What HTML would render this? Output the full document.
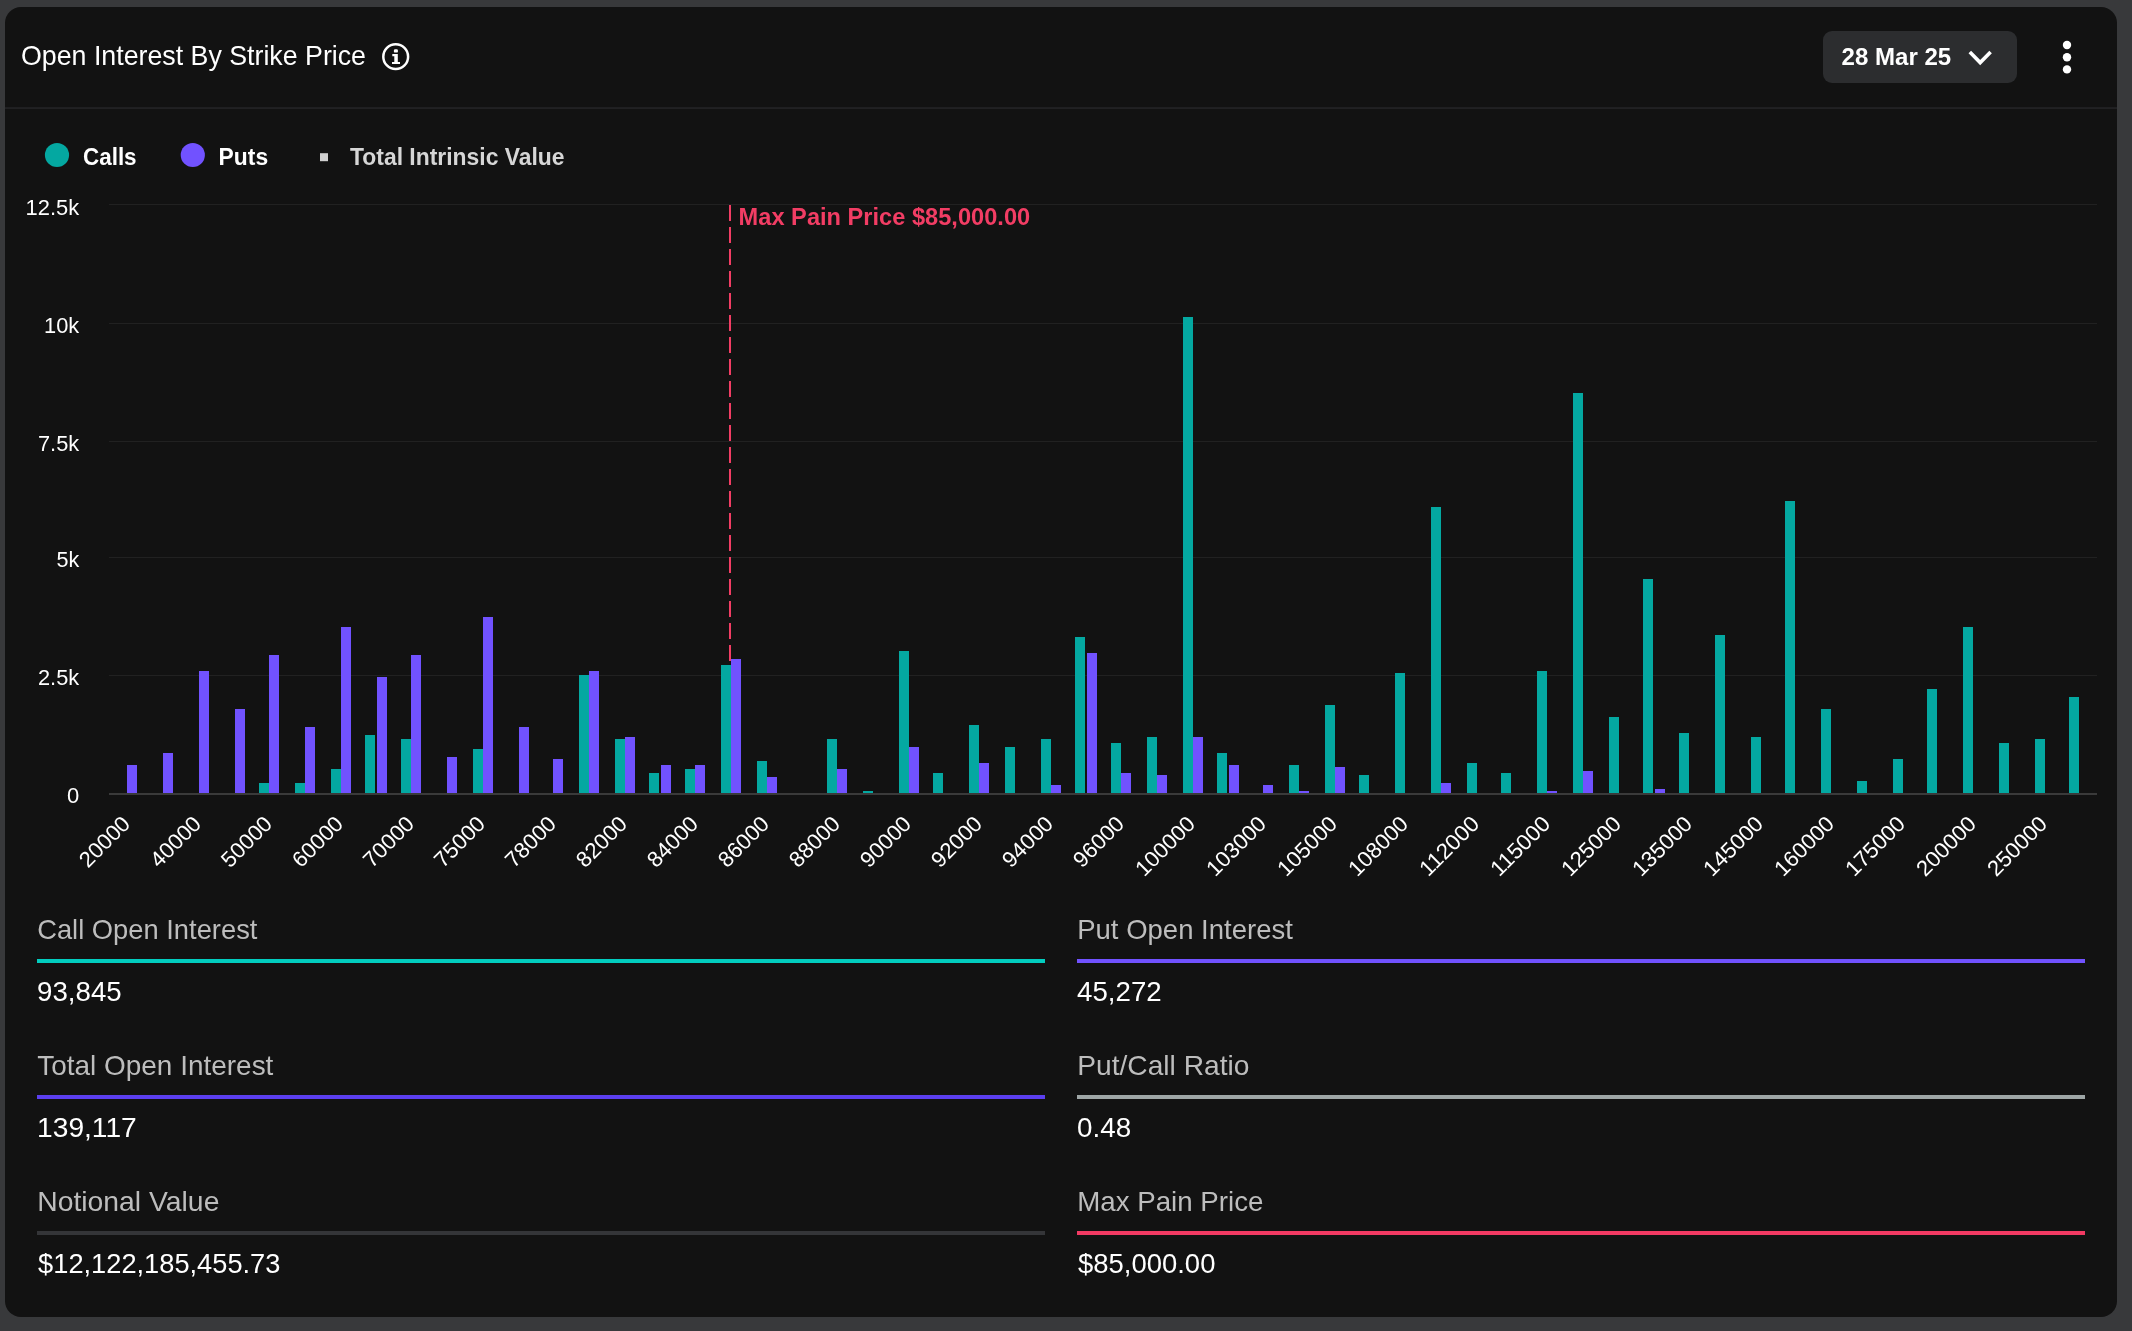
<!DOCTYPE html>
<html><head><meta charset="utf-8"><title>Open Interest By Strike Price</title>
<style>html,body{margin:0;padding:0;background:#38393b;}body{width:2132px;height:1331px;overflow:hidden;}svg{display:block;will-change:transform;}text{font-family:"Liberation Sans", sans-serif;}</style>
</head><body>
<svg width="2132" height="1331" viewBox="0 0 2132 1331">
<rect x="0" y="0" width="2132" height="1331" fill="#38393b"/>
<rect x="5" y="7" width="2112" height="1310" rx="16" ry="16" fill="#121212"/>
<text x="21" y="64.6" font-size="27.8" fill="#ffffff" font-weight="normal" text-anchor="start" textLength="345" lengthAdjust="spacingAndGlyphs">Open Interest By Strike Price</text>
<circle cx="395.7" cy="56.7" r="12.4" fill="none" stroke="#fff" stroke-width="2.5"/>
<rect x="393.9" y="49.2" width="4" height="3.4" rx="1.2" fill="#fff"/>
<path d="M392.3 54.1H397.8V62.1H400V64H392V62.1H394.3V56.2H392.3Z" fill="#fff"/>
<rect x="1823" y="31" width="194" height="52" rx="9" fill="#2c2d2f"/>
<text x="1841.6" y="65.2" font-size="24.8" fill="#fff" font-weight="bold" text-anchor="start" textLength="109.6" lengthAdjust="spacingAndGlyphs">28 Mar 25</text>
<path d="M1969.8 52.1L1980.2 62.6L1990.6 52.1" fill="none" stroke="#fff" stroke-width="3.6" stroke-linejoin="miter"/>
<circle cx="2067" cy="45" r="4.2" fill="#fff"/>
<circle cx="2067" cy="57.2" r="4.2" fill="#fff"/>
<circle cx="2067" cy="69.4" r="4.2" fill="#fff"/>
<rect x="5" y="107.4" width="2112" height="1.3" fill="#28292b"/>
<circle cx="57" cy="155" r="12.1" fill="#04a8a1"/>
<text x="83" y="164.8" font-size="24.3" fill="#fff" font-weight="bold" text-anchor="start" textLength="53.6" lengthAdjust="spacingAndGlyphs">Calls</text>
<circle cx="192.8" cy="155" r="12.1" fill="#7152ff"/>
<text x="218.6" y="164.8" font-size="24.3" fill="#fff" font-weight="bold" text-anchor="start" textLength="49.5" lengthAdjust="spacingAndGlyphs">Puts</text>
<rect x="320" y="153.2" width="8" height="8" fill="#d0d0d0"/>
<text x="350" y="164.8" font-size="24.3" fill="#d6d6d6" font-weight="bold" text-anchor="start" textLength="214.6" lengthAdjust="spacingAndGlyphs">Total Intrinsic Value</text>
<rect x="109" y="204" width="1988" height="1" fill="#212121"/>
<text x="79.2" y="214.8" font-size="22" fill="#fff" font-weight="normal" text-anchor="end" textLength="53.6" lengthAdjust="spacingAndGlyphs">12.5k</text>
<rect x="109" y="323" width="1988" height="1" fill="#212121"/>
<text x="79.2" y="333.3" font-size="22" fill="#fff" font-weight="normal" text-anchor="end" textLength="35.2" lengthAdjust="spacingAndGlyphs">10k</text>
<rect x="109" y="441" width="1988" height="1" fill="#212121"/>
<text x="79.2" y="451.3" font-size="22" fill="#fff" font-weight="normal" text-anchor="end" textLength="41.2" lengthAdjust="spacingAndGlyphs">7.5k</text>
<rect x="109" y="557" width="1988" height="1" fill="#212121"/>
<text x="79.2" y="567.3" font-size="22" fill="#fff" font-weight="normal" text-anchor="end" textLength="22.8" lengthAdjust="spacingAndGlyphs">5k</text>
<rect x="109" y="675" width="1988" height="1" fill="#212121"/>
<text x="79.2" y="685.3" font-size="22" fill="#fff" font-weight="normal" text-anchor="end" textLength="41.2" lengthAdjust="spacingAndGlyphs">2.5k</text>
<text x="79.2" y="803.3" font-size="22" fill="#fff" font-weight="normal" text-anchor="end">0</text>
<line x1="730" y1="205" x2="730" y2="793" stroke="#f23d64" stroke-width="2" stroke-dasharray="16 6"/>
<text x="738.6" y="225" font-size="23.7" fill="#f23d64" font-weight="bold" text-anchor="start" textLength="291.6" lengthAdjust="spacingAndGlyphs">Max Pain Price $85,000.00</text>
<g fill="#04a8a1">
<rect x="259" y="783" width="10" height="10"/>
<rect x="295" y="783" width="10" height="10"/>
<rect x="331" y="769" width="10" height="24"/>
<rect x="365" y="735" width="10" height="58"/>
<rect x="401" y="739" width="10" height="54"/>
<rect x="473" y="749" width="10" height="44"/>
<rect x="579" y="675" width="10" height="118"/>
<rect x="615" y="739" width="10" height="54"/>
<rect x="649" y="773" width="10" height="20"/>
<rect x="685" y="769" width="10" height="24"/>
<rect x="721" y="665" width="10" height="128"/>
<rect x="757" y="761" width="10" height="32"/>
<rect x="827" y="739" width="10" height="54"/>
<rect x="863" y="791" width="10" height="2"/>
<rect x="899" y="651" width="10" height="142"/>
<rect x="933" y="773" width="10" height="20"/>
<rect x="969" y="725" width="10" height="68"/>
<rect x="1005" y="747" width="10" height="46"/>
<rect x="1041" y="739" width="10" height="54"/>
<rect x="1075" y="637" width="10" height="156"/>
<rect x="1111" y="743" width="10" height="50"/>
<rect x="1147" y="737" width="10" height="56"/>
<rect x="1183" y="317" width="10" height="476"/>
<rect x="1217" y="753" width="10" height="40"/>
<rect x="1289" y="765" width="10" height="28"/>
<rect x="1325" y="705" width="10" height="88"/>
<rect x="1359" y="775" width="10" height="18"/>
<rect x="1395" y="673" width="10" height="120"/>
<rect x="1431" y="507" width="10" height="286"/>
<rect x="1467" y="763" width="10" height="30"/>
<rect x="1501" y="773" width="10" height="20"/>
<rect x="1537" y="671" width="10" height="122"/>
<rect x="1573" y="393" width="10" height="400"/>
<rect x="1609" y="717" width="10" height="76"/>
<rect x="1643" y="579" width="10" height="214"/>
<rect x="1679" y="733" width="10" height="60"/>
<rect x="1715" y="635" width="10" height="158"/>
<rect x="1751" y="737" width="10" height="56"/>
<rect x="1785" y="501" width="10" height="292"/>
<rect x="1821" y="709" width="10" height="84"/>
<rect x="1857" y="781" width="10" height="12"/>
<rect x="1893" y="759" width="10" height="34"/>
<rect x="1927" y="689" width="10" height="104"/>
<rect x="1963" y="627" width="10" height="166"/>
<rect x="1999" y="743" width="10" height="50"/>
<rect x="2035" y="739" width="10" height="54"/>
<rect x="2069" y="697" width="10" height="96"/>
</g><g fill="#7152ff">
<rect x="127" y="765" width="10" height="28"/>
<rect x="163" y="753" width="10" height="40"/>
<rect x="199" y="671" width="10" height="122"/>
<rect x="235" y="709" width="10" height="84"/>
<rect x="269" y="655" width="10" height="138"/>
<rect x="305" y="727" width="10" height="66"/>
<rect x="341" y="627" width="10" height="166"/>
<rect x="377" y="677" width="10" height="116"/>
<rect x="411" y="655" width="10" height="138"/>
<rect x="447" y="757" width="10" height="36"/>
<rect x="483" y="617" width="10" height="176"/>
<rect x="519" y="727" width="10" height="66"/>
<rect x="553" y="759" width="10" height="34"/>
<rect x="589" y="671" width="10" height="122"/>
<rect x="625" y="737" width="10" height="56"/>
<rect x="661" y="765" width="10" height="28"/>
<rect x="695" y="765" width="10" height="28"/>
<rect x="731" y="659" width="10" height="134"/>
<rect x="767" y="777" width="10" height="16"/>
<rect x="837" y="769" width="10" height="24"/>
<rect x="909" y="747" width="10" height="46"/>
<rect x="979" y="763" width="10" height="30"/>
<rect x="1051" y="785" width="10" height="8"/>
<rect x="1087" y="653" width="10" height="140"/>
<rect x="1121" y="773" width="10" height="20"/>
<rect x="1157" y="775" width="10" height="18"/>
<rect x="1193" y="737" width="10" height="56"/>
<rect x="1229" y="765" width="10" height="28"/>
<rect x="1263" y="785" width="10" height="8"/>
<rect x="1299" y="791" width="10" height="2"/>
<rect x="1335" y="767" width="10" height="26"/>
<rect x="1441" y="783" width="10" height="10"/>
<rect x="1547" y="791" width="10" height="2"/>
<rect x="1583" y="771" width="10" height="22"/>
<rect x="1655" y="789" width="10" height="4"/>
</g>
<rect x="109" y="793" width="1988" height="2" fill="#3a3a3a"/>
<text x="131.6" y="825.2" font-size="22" fill="#fff" text-anchor="end" textLength="61.6" lengthAdjust="spacingAndGlyphs" transform="rotate(-45 131.6 825.2)">20000</text>
<text x="202.6" y="825.2" font-size="22" fill="#fff" text-anchor="end" textLength="61.6" lengthAdjust="spacingAndGlyphs" transform="rotate(-45 202.6 825.2)">40000</text>
<text x="273.6" y="825.2" font-size="22" fill="#fff" text-anchor="end" textLength="61.6" lengthAdjust="spacingAndGlyphs" transform="rotate(-45 273.6 825.2)">50000</text>
<text x="344.6" y="825.2" font-size="22" fill="#fff" text-anchor="end" textLength="61.6" lengthAdjust="spacingAndGlyphs" transform="rotate(-45 344.6 825.2)">60000</text>
<text x="415.6" y="825.2" font-size="22" fill="#fff" text-anchor="end" textLength="61.6" lengthAdjust="spacingAndGlyphs" transform="rotate(-45 415.6 825.2)">70000</text>
<text x="486.6" y="825.2" font-size="22" fill="#fff" text-anchor="end" textLength="61.6" lengthAdjust="spacingAndGlyphs" transform="rotate(-45 486.6 825.2)">75000</text>
<text x="557.6" y="825.2" font-size="22" fill="#fff" text-anchor="end" textLength="61.6" lengthAdjust="spacingAndGlyphs" transform="rotate(-45 557.6 825.2)">78000</text>
<text x="628.6" y="825.2" font-size="22" fill="#fff" text-anchor="end" textLength="61.6" lengthAdjust="spacingAndGlyphs" transform="rotate(-45 628.6 825.2)">82000</text>
<text x="699.6" y="825.2" font-size="22" fill="#fff" text-anchor="end" textLength="61.6" lengthAdjust="spacingAndGlyphs" transform="rotate(-45 699.6 825.2)">84000</text>
<text x="770.6" y="825.2" font-size="22" fill="#fff" text-anchor="end" textLength="61.6" lengthAdjust="spacingAndGlyphs" transform="rotate(-45 770.6 825.2)">86000</text>
<text x="841.6" y="825.2" font-size="22" fill="#fff" text-anchor="end" textLength="61.6" lengthAdjust="spacingAndGlyphs" transform="rotate(-45 841.6 825.2)">88000</text>
<text x="912.6" y="825.2" font-size="22" fill="#fff" text-anchor="end" textLength="61.6" lengthAdjust="spacingAndGlyphs" transform="rotate(-45 912.6 825.2)">90000</text>
<text x="983.6" y="825.2" font-size="22" fill="#fff" text-anchor="end" textLength="61.6" lengthAdjust="spacingAndGlyphs" transform="rotate(-45 983.6 825.2)">92000</text>
<text x="1054.6" y="825.2" font-size="22" fill="#fff" text-anchor="end" textLength="61.6" lengthAdjust="spacingAndGlyphs" transform="rotate(-45 1054.6 825.2)">94000</text>
<text x="1125.6" y="825.2" font-size="22" fill="#fff" text-anchor="end" textLength="61.6" lengthAdjust="spacingAndGlyphs" transform="rotate(-45 1125.6 825.2)">96000</text>
<text x="1196.6" y="825.2" font-size="22" fill="#fff" text-anchor="end" textLength="74.0" lengthAdjust="spacingAndGlyphs" transform="rotate(-45 1196.6 825.2)">100000</text>
<text x="1267.6" y="825.2" font-size="22" fill="#fff" text-anchor="end" textLength="74.0" lengthAdjust="spacingAndGlyphs" transform="rotate(-45 1267.6 825.2)">103000</text>
<text x="1338.6" y="825.2" font-size="22" fill="#fff" text-anchor="end" textLength="74.0" lengthAdjust="spacingAndGlyphs" transform="rotate(-45 1338.6 825.2)">105000</text>
<text x="1409.6" y="825.2" font-size="22" fill="#fff" text-anchor="end" textLength="74.0" lengthAdjust="spacingAndGlyphs" transform="rotate(-45 1409.6 825.2)">108000</text>
<text x="1480.6" y="825.2" font-size="22" fill="#fff" text-anchor="end" textLength="74.0" lengthAdjust="spacingAndGlyphs" transform="rotate(-45 1480.6 825.2)">112000</text>
<text x="1551.6" y="825.2" font-size="22" fill="#fff" text-anchor="end" textLength="74.0" lengthAdjust="spacingAndGlyphs" transform="rotate(-45 1551.6 825.2)">115000</text>
<text x="1622.6" y="825.2" font-size="22" fill="#fff" text-anchor="end" textLength="74.0" lengthAdjust="spacingAndGlyphs" transform="rotate(-45 1622.6 825.2)">125000</text>
<text x="1693.6" y="825.2" font-size="22" fill="#fff" text-anchor="end" textLength="74.0" lengthAdjust="spacingAndGlyphs" transform="rotate(-45 1693.6 825.2)">135000</text>
<text x="1764.6" y="825.2" font-size="22" fill="#fff" text-anchor="end" textLength="74.0" lengthAdjust="spacingAndGlyphs" transform="rotate(-45 1764.6 825.2)">145000</text>
<text x="1835.6" y="825.2" font-size="22" fill="#fff" text-anchor="end" textLength="74.0" lengthAdjust="spacingAndGlyphs" transform="rotate(-45 1835.6 825.2)">160000</text>
<text x="1906.6" y="825.2" font-size="22" fill="#fff" text-anchor="end" textLength="74.0" lengthAdjust="spacingAndGlyphs" transform="rotate(-45 1906.6 825.2)">175000</text>
<text x="1977.6" y="825.2" font-size="22" fill="#fff" text-anchor="end" textLength="74.0" lengthAdjust="spacingAndGlyphs" transform="rotate(-45 1977.6 825.2)">200000</text>
<text x="2048.6" y="825.2" font-size="22" fill="#fff" text-anchor="end" textLength="74.0" lengthAdjust="spacingAndGlyphs" transform="rotate(-45 2048.6 825.2)">250000</text>
<text x="37.2" y="938.5" font-size="28" fill="#bdbdbd" font-weight="normal" text-anchor="start" textLength="220.2" lengthAdjust="spacingAndGlyphs">Call Open Interest</text>
<rect x="37" y="959" width="1008" height="4" fill="#02cdbf"/>
<text x="37.1" y="1000.5" font-size="27.4" fill="#fff" font-weight="normal" text-anchor="start" textLength="84.6" lengthAdjust="spacingAndGlyphs">93,845</text>
<text x="37.2" y="1074.5" font-size="28" fill="#bdbdbd" font-weight="normal" text-anchor="start" textLength="236.2" lengthAdjust="spacingAndGlyphs">Total Open Interest</text>
<rect x="37" y="1095" width="1008" height="4" fill="#5b3fef"/>
<text x="37.1" y="1136.5" font-size="27.4" fill="#fff" font-weight="normal" text-anchor="start" textLength="99.6" lengthAdjust="spacingAndGlyphs">139,117</text>
<text x="37.2" y="1210.5" font-size="28" fill="#bdbdbd" font-weight="normal" text-anchor="start" textLength="182.2" lengthAdjust="spacingAndGlyphs">Notional Value</text>
<rect x="37" y="1231" width="1008" height="4" fill="#343538"/>
<text x="38.1" y="1272.5" font-size="27.4" fill="#fff" font-weight="normal" text-anchor="start" textLength="242.29999999999998" lengthAdjust="spacingAndGlyphs">$12,122,185,455.73</text>
<text x="1077.2" y="938.5" font-size="28" fill="#bdbdbd" font-weight="normal" text-anchor="start" textLength="215.7" lengthAdjust="spacingAndGlyphs">Put Open Interest</text>
<rect x="1077" y="959" width="1008" height="4" fill="#7152ff"/>
<text x="1077.1" y="1000.5" font-size="27.4" fill="#fff" font-weight="normal" text-anchor="start" textLength="84.6" lengthAdjust="spacingAndGlyphs">45,272</text>
<text x="1077.2" y="1074.5" font-size="28" fill="#bdbdbd" font-weight="normal" text-anchor="start" textLength="172.2" lengthAdjust="spacingAndGlyphs">Put/Call Ratio</text>
<rect x="1077" y="1095" width="1008" height="4" fill="#9ea6a6"/>
<text x="1077.1" y="1136.5" font-size="27.4" fill="#fff" font-weight="normal" text-anchor="start" textLength="54.1" lengthAdjust="spacingAndGlyphs">0.48</text>
<text x="1077.2" y="1210.5" font-size="28" fill="#bdbdbd" font-weight="normal" text-anchor="start" textLength="186.2" lengthAdjust="spacingAndGlyphs">Max Pain Price</text>
<rect x="1077" y="1231" width="1008" height="4" fill="#f23a63"/>
<text x="1078.1" y="1272.5" font-size="27.4" fill="#fff" font-weight="normal" text-anchor="start" textLength="137.29999999999998" lengthAdjust="spacingAndGlyphs">$85,000.00</text>
</svg></body></html>
